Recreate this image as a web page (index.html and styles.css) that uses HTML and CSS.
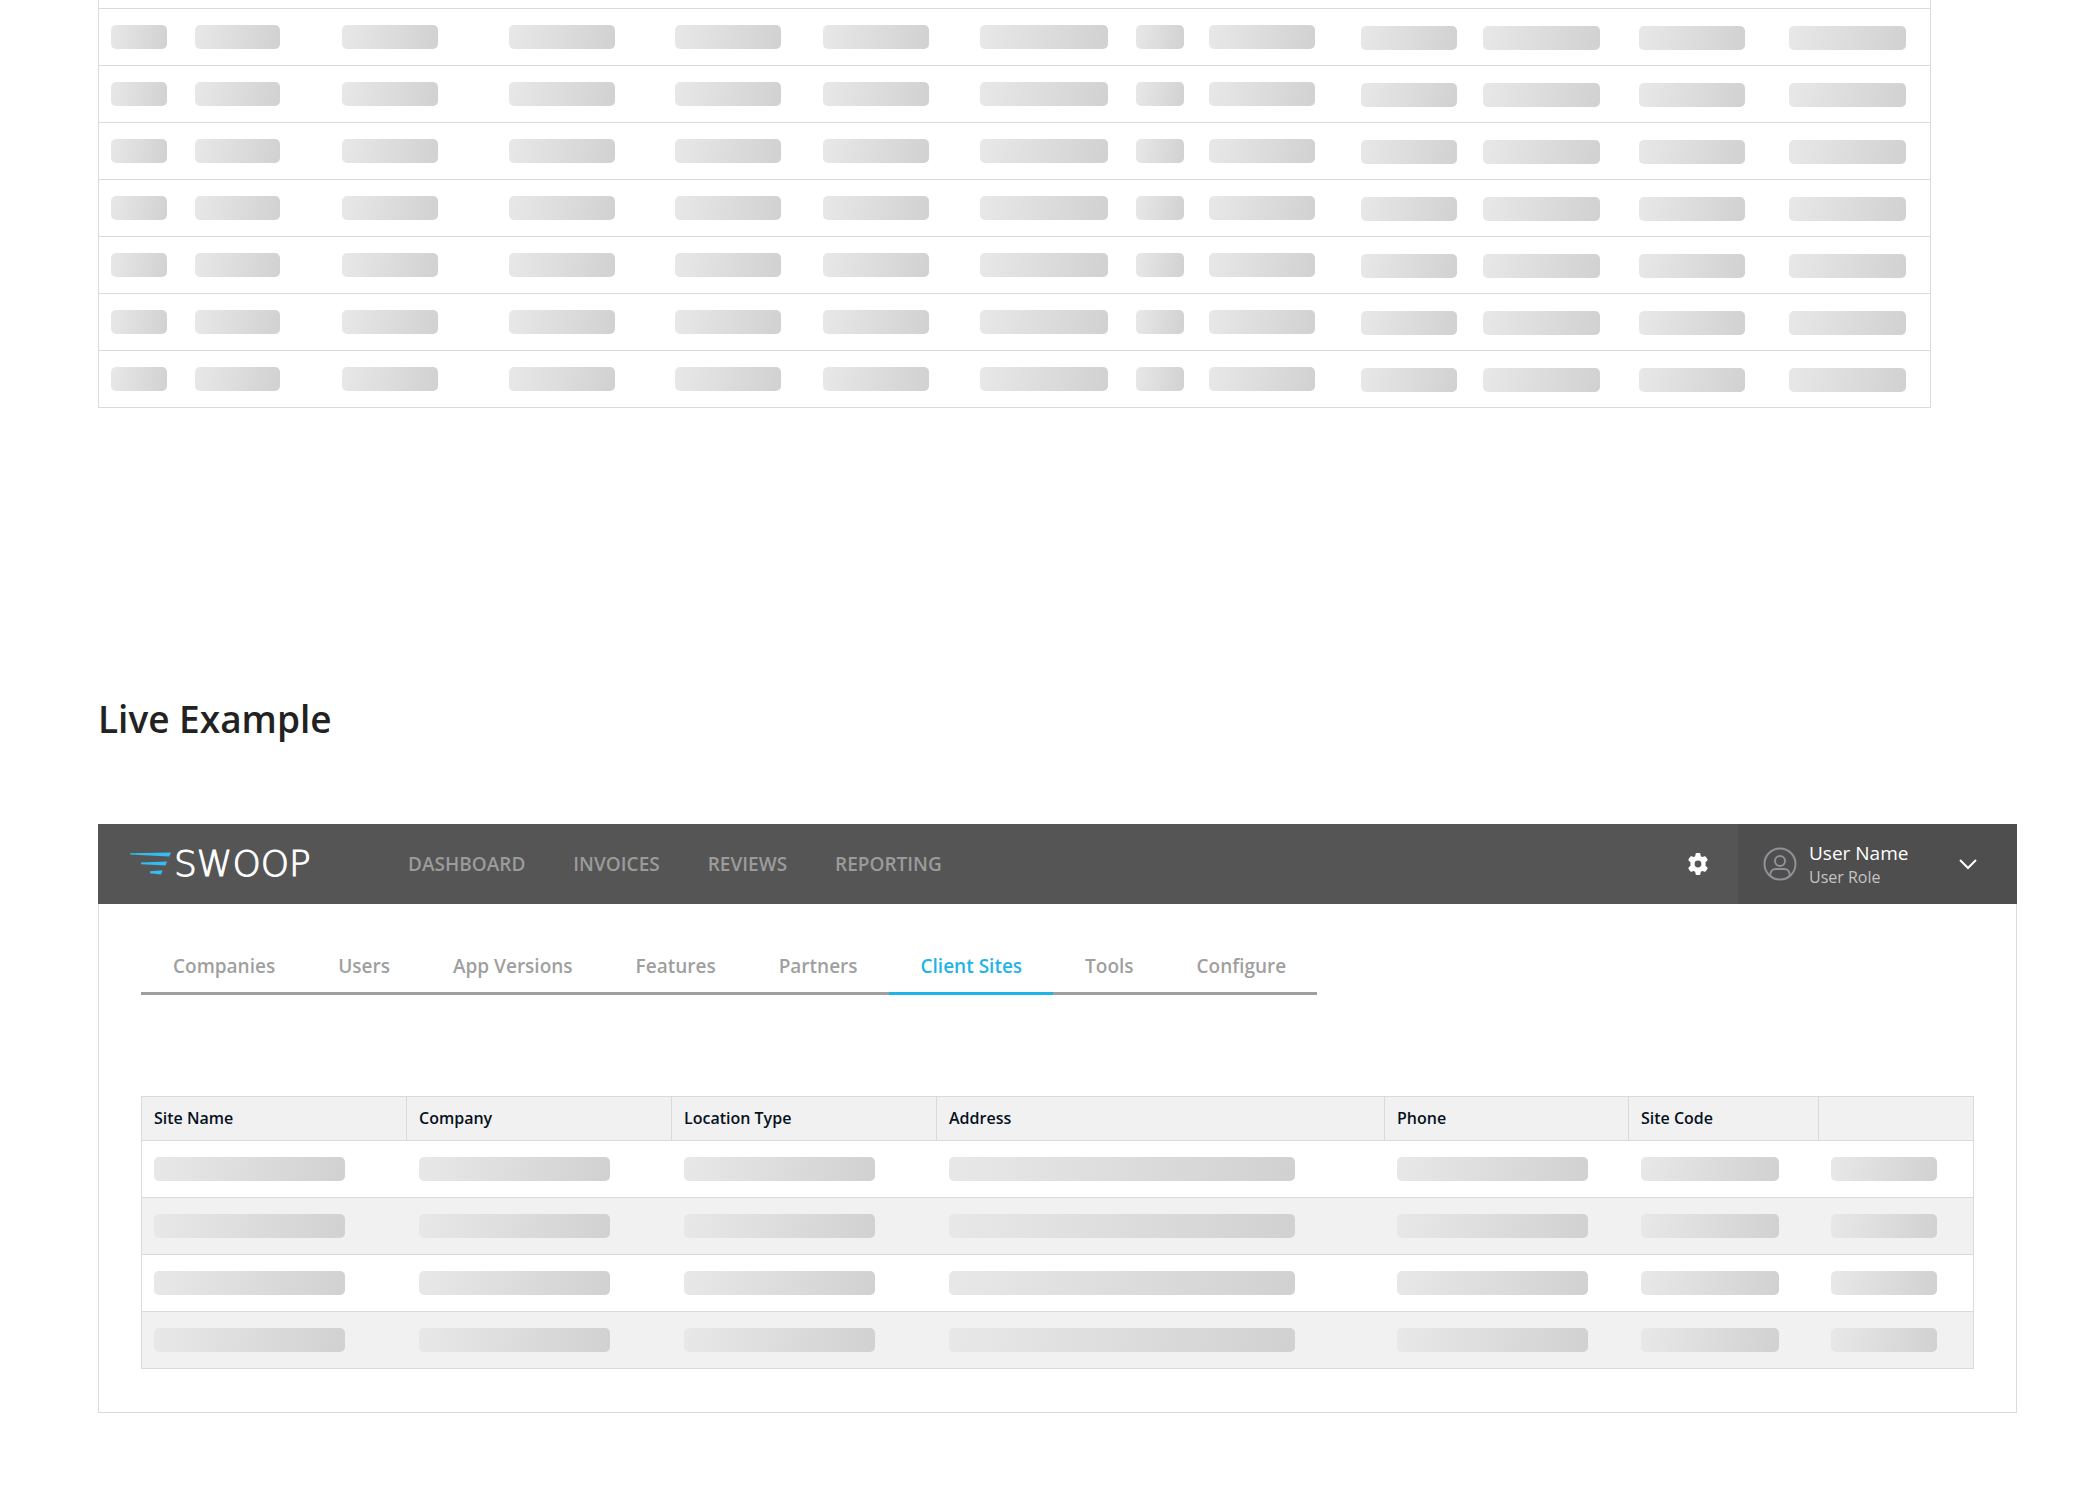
FILE: index.html
```
<!DOCTYPE html>
<html lang="en">
<head>
<meta charset="utf-8">
<meta name="viewport" content="width=device-width, initial-scale=1">
<title>Table loading states</title>
<link rel="stylesheet" href="styles.css">
</head>
<body>
<main class="page">
  <section class="sample">
    <table class="grid grid-wide" aria-label="Loading rows">
      <colgroup><col class="c84"><col class="c147"><col class="c167"><col class="c166"><col class="c148"><col class="c157"><col class="c156"><col class="c73"><col class="c152"><col class="c122"><col class="c156"><col class="c150"><col></colgroup>
      <tbody>
        <tr class="row-end"><td></td><td></td><td></td><td></td><td></td><td></td><td></td><td></td><td></td><td></td><td></td><td></td><td></td></tr>
        <tr><td><div class="bar w56"></div></td><td><div class="bar w85"></div></td><td><div class="bar w96"></div></td><td><div class="bar w106"></div></td><td><div class="bar w106"></div></td><td><div class="bar w106"></div></td><td><div class="bar w128"></div></td><td><div class="bar w48"></div></td><td><div class="bar w106"></div></td><td><div class="bar w96"></div></td><td><div class="bar w117"></div></td><td><div class="bar w106"></div></td><td><div class="bar w117"></div></td></tr>
        <tr><td><div class="bar w56"></div></td><td><div class="bar w85"></div></td><td><div class="bar w96"></div></td><td><div class="bar w106"></div></td><td><div class="bar w106"></div></td><td><div class="bar w106"></div></td><td><div class="bar w128"></div></td><td><div class="bar w48"></div></td><td><div class="bar w106"></div></td><td><div class="bar w96"></div></td><td><div class="bar w117"></div></td><td><div class="bar w106"></div></td><td><div class="bar w117"></div></td></tr>
        <tr><td><div class="bar w56"></div></td><td><div class="bar w85"></div></td><td><div class="bar w96"></div></td><td><div class="bar w106"></div></td><td><div class="bar w106"></div></td><td><div class="bar w106"></div></td><td><div class="bar w128"></div></td><td><div class="bar w48"></div></td><td><div class="bar w106"></div></td><td><div class="bar w96"></div></td><td><div class="bar w117"></div></td><td><div class="bar w106"></div></td><td><div class="bar w117"></div></td></tr>
        <tr><td><div class="bar w56"></div></td><td><div class="bar w85"></div></td><td><div class="bar w96"></div></td><td><div class="bar w106"></div></td><td><div class="bar w106"></div></td><td><div class="bar w106"></div></td><td><div class="bar w128"></div></td><td><div class="bar w48"></div></td><td><div class="bar w106"></div></td><td><div class="bar w96"></div></td><td><div class="bar w117"></div></td><td><div class="bar w106"></div></td><td><div class="bar w117"></div></td></tr>
        <tr><td><div class="bar w56"></div></td><td><div class="bar w85"></div></td><td><div class="bar w96"></div></td><td><div class="bar w106"></div></td><td><div class="bar w106"></div></td><td><div class="bar w106"></div></td><td><div class="bar w128"></div></td><td><div class="bar w48"></div></td><td><div class="bar w106"></div></td><td><div class="bar w96"></div></td><td><div class="bar w117"></div></td><td><div class="bar w106"></div></td><td><div class="bar w117"></div></td></tr>
        <tr><td><div class="bar w56"></div></td><td><div class="bar w85"></div></td><td><div class="bar w96"></div></td><td><div class="bar w106"></div></td><td><div class="bar w106"></div></td><td><div class="bar w106"></div></td><td><div class="bar w128"></div></td><td><div class="bar w48"></div></td><td><div class="bar w106"></div></td><td><div class="bar w96"></div></td><td><div class="bar w117"></div></td><td><div class="bar w106"></div></td><td><div class="bar w117"></div></td></tr>
        <tr><td><div class="bar w56"></div></td><td><div class="bar w85"></div></td><td><div class="bar w96"></div></td><td><div class="bar w106"></div></td><td><div class="bar w106"></div></td><td><div class="bar w106"></div></td><td><div class="bar w128"></div></td><td><div class="bar w48"></div></td><td><div class="bar w106"></div></td><td><div class="bar w96"></div></td><td><div class="bar w117"></div></td><td><div class="bar w106"></div></td><td><div class="bar w117"></div></td></tr>
      </tbody>
    </table>
  </section>

  <section class="example">
    <h2 class="title">Live Example</h2>
    <div class="app">
      <header class="topbar">
        <a class="logo" href="#">
          <svg class="logo-mark" width="42" height="24" viewBox="0 0 42 24" aria-hidden="true"><path fill="#33bdf2" d="M0 1.2 41 .6 39.4 4.6 0 2.6zM11 10.4l26-.9-1.4 4L11 12.2zM20 19.2l12.6-1-1.6 4.4-11-1.4z"/></svg>
          <span class="logo-text">SWOOP</span>
        </a>
        <nav class="menu" aria-label="Main">
          <a href="#">DASHBOARD</a>
          <a href="#">INVOICES</a>
          <a href="#">REVIEWS</a>
          <a href="#">REPORTING</a>
        </nav>
        <button class="settings" type="button" aria-label="Settings">
          <svg width="22" height="22" viewBox="0 0 22 22" aria-hidden="true"><path fill="#fff" fill-rule="evenodd" d="M8.6.9Q8.8 0 9.6 0h2.8q.8 0 1 .9l.4 2.3 1.6.9 2.2-.8q.8-.3 1.2.4l1.7 2.6q.4.8-.3 1.4L18.5 9.300q.2 1.700 0 3.400l1.700 1.600q.7.6.3 1.400l-1.700 2.600q-.4.7-1.200.4l-2.200-.8-1.600.9-.4 2.300q-.2.9-1 .9H9.600q-.8 0-1-.9l-.4-2.300-1.600-.9-2.200.8q-.8.3-1.200-.4L1.500 15.700q-.4-.8.3-1.400l1.700-1.600q-.2-1.700 0-3.400L1.800 7.700q-.7-.6-.3-1.400l1.700-2.600q.4-.7 1.200-.4l2.200.8 1.600-.9zM11 7.600a3.400 3.400 0 1 0 0 6.800 3.400 3.400 0 0 0 0-6.800z"/></svg>
        </button>
        <button class="account" type="button">
          <svg class="avatar" width="34" height="34" viewBox="0 0 34 34" fill="none" stroke="#929199" stroke-width="2" aria-hidden="true"><circle cx="17" cy="17" r="15.500"/><circle cx="17" cy="14" r="5"/><path d="M7.300 29c-.5-5 2.500-7 5.700-7h8c3.200 0 6.200 2 5.700 7"/></svg>
          <span class="who"><span class="who-name">User Name</span><span class="who-role">User Role</span></span>
          <svg width="18" height="12" viewBox="0 0 18 12" fill="none" stroke="#fff" stroke-width="2" aria-hidden="true"><path d="M1 2l8 8 8-8"/></svg>
        </button>
      </header>
      <div class="panel">
        <nav class="tabs" aria-label="Sections">
          <a href="#">Companies</a>
          <a href="#">Users</a>
          <a href="#">App Versions</a>
          <a href="#">Features</a>
          <a href="#">Partners</a>
          <a class="active" href="#" aria-current="page">Client Sites</a>
          <a href="#">Tools</a>
          <a href="#">Configure</a>
        </nav>
        <table class="grid grid-sites">
          <colgroup><col class="c264"><col class="c265"><col class="c265"><col><col class="c244"><col class="c190"><col class="c155"></colgroup>
          <thead>
            <tr><th scope="col">Site Name</th><th scope="col">Company</th><th scope="col">Location Type</th><th scope="col">Address</th><th scope="col">Phone</th><th scope="col">Site Code</th><th></th></tr>
          </thead>
          <tbody>
            <tr><td><div class="bar w191"></div></td><td><div class="bar w191"></div></td><td><div class="bar w191"></div></td><td><div class="bar w346"></div></td><td><div class="bar w191"></div></td><td><div class="bar w138"></div></td><td><div class="bar w106"></div></td></tr>
            <tr><td><div class="bar w191"></div></td><td><div class="bar w191"></div></td><td><div class="bar w191"></div></td><td><div class="bar w346"></div></td><td><div class="bar w191"></div></td><td><div class="bar w138"></div></td><td><div class="bar w106"></div></td></tr>
            <tr><td><div class="bar w191"></div></td><td><div class="bar w191"></div></td><td><div class="bar w191"></div></td><td><div class="bar w346"></div></td><td><div class="bar w191"></div></td><td><div class="bar w138"></div></td><td><div class="bar w106"></div></td></tr>
            <tr><td><div class="bar w191"></div></td><td><div class="bar w191"></div></td><td><div class="bar w191"></div></td><td><div class="bar w346"></div></td><td><div class="bar w191"></div></td><td><div class="bar w138"></div></td><td><div class="bar w106"></div></td></tr>
          </tbody>
        </table>
      </div>
    </div>
  </section>
</main>
</body>
</html>
```
FILE: styles.css
```
* { box-sizing: border-box; }

body {
  margin: 0;
  background: #fff;
  color: #222;
  font-family: "Open Sans", "Noto Sans", sans-serif;
}

a { color: inherit; text-decoration: none; }

button {
  border: 0;
  background: none;
  font: inherit;
  color: inherit;
  cursor: pointer;
}

svg { display: block; flex: none; }

.page { padding: 0 83px 87px 98px; }
.sample { padding-right: 86px; }

/* Placeholder tables */
.grid {
  width: 100%;
  table-layout: fixed;
  border-collapse: separate;
  border-spacing: 0;
  border: 1px solid #dadada;
}
.grid td { padding: 16px 0 16px 13px; border-bottom: 1px solid #dadada; }
.grid td:first-child { padding-left: 12px; }
.grid tr:last-child td { border-bottom: 0; }

.grid-wide { border-top: 0; }
.grid-wide td { padding-left: 12px; }
.grid-wide td:nth-child(n+10) { padding-top: 17px; padding-bottom: 15px; }
.grid-wide .row-end td { height: 9px; padding: 0; }

.grid-sites th {
  height: 44px;
  padding: 0 0 2px 12px;
  border-bottom: 1px solid #dadada;
  border-left: 1px solid #dadada;
  background: #f1f1f1;
  color: #07121e;
  font-size: 16px;
  line-height: 22px;
  font-weight: 600;
  text-align: left;
}
.grid-sites th:first-child { border-left: 0; }
.grid-sites tbody tr:nth-child(even) { background: #f1f1f1; }

.bar {
  height: 24px;
  border-radius: 5px;
  background: linear-gradient(100deg, #e8e8e8, #d1d1d1);
}

.w48 { width: 48px; }
.w56 { width: 56px; }
.w85 { width: 85px; }
.w96 { width: 96px; }
.w106 { width: 106px; }
.w117 { width: 117px; }
.w128 { width: 128px; }
.w138 { width: 138px; }
.w191 { width: 191px; }
.w346 { width: 346px; }

.c73 { width: 73px; }
.c84 { width: 84px; }
.c122 { width: 122px; }
.c147 { width: 147px; }
.c148 { width: 148px; }
.c150 { width: 150px; }
.c152 { width: 152px; }
.c155 { width: 155px; }
.c156 { width: 156px; }
.c157 { width: 157px; }
.c166 { width: 166px; }
.c167 { width: 167px; }
.c190 { width: 190px; }
.c244 { width: 244px; }
.c264 { width: 264px; }
.c265 { width: 265px; }

.title {
  margin: 285px 0 79px;
  font-size: 37px;
  line-height: 52px;
  font-weight: 600;
}

/* Top bar */
.topbar {
  display: flex;
  align-items: center;
  height: 80px;
  padding-left: 32px;
  background: #555;
}
.logo { display: flex; align-items: center; gap: 2px; width: 278px; color: #fff; }
.logo-text {
  font-family: "DejaVu Sans", sans-serif;
  font-size: 36px;
  line-height: 40px;
  font-weight: 200;
  -webkit-text-stroke: 1px #fff;
}
.menu {
  display: flex;
  gap: 48px;
  margin-right: auto;
  color: #9b9b9b;
  font-size: 19px;
  line-height: 26px;
  font-weight: 600;
}
.settings { padding: 0; margin-right: 29px; }
.account {
  display: flex;
  align-items: center;
  width: 279px;
  height: 80px;
  padding: 0 40px 0 25px;
  background: #4e4e4e;
  text-align: left;
}
.who { display: flex; flex-direction: column; margin: 0 auto 0 12px; }
.who-name { color: #fff; font-size: 19px; line-height: 26px; }
.who-role { color: #c4c4c4; font-size: 16px; line-height: 22px; }

/* Panel under the bar */
.panel {
  padding: 49px 42px 43px;
  border: 1px solid #dadada;
  border-top: 0;
}
.tabs {
  display: flex;
  width: fit-content;
  margin-bottom: 101px;
  color: #9f9f9f;
  font-size: 19px;
  line-height: 26px;
  font-weight: 600;
}
.tabs a { padding: 0 31px 13px 32px; border-bottom: 3px solid #9f9f9f; }
.tabs .active { color: #1fb4e8; border-color: #1fb4e8; }
```
